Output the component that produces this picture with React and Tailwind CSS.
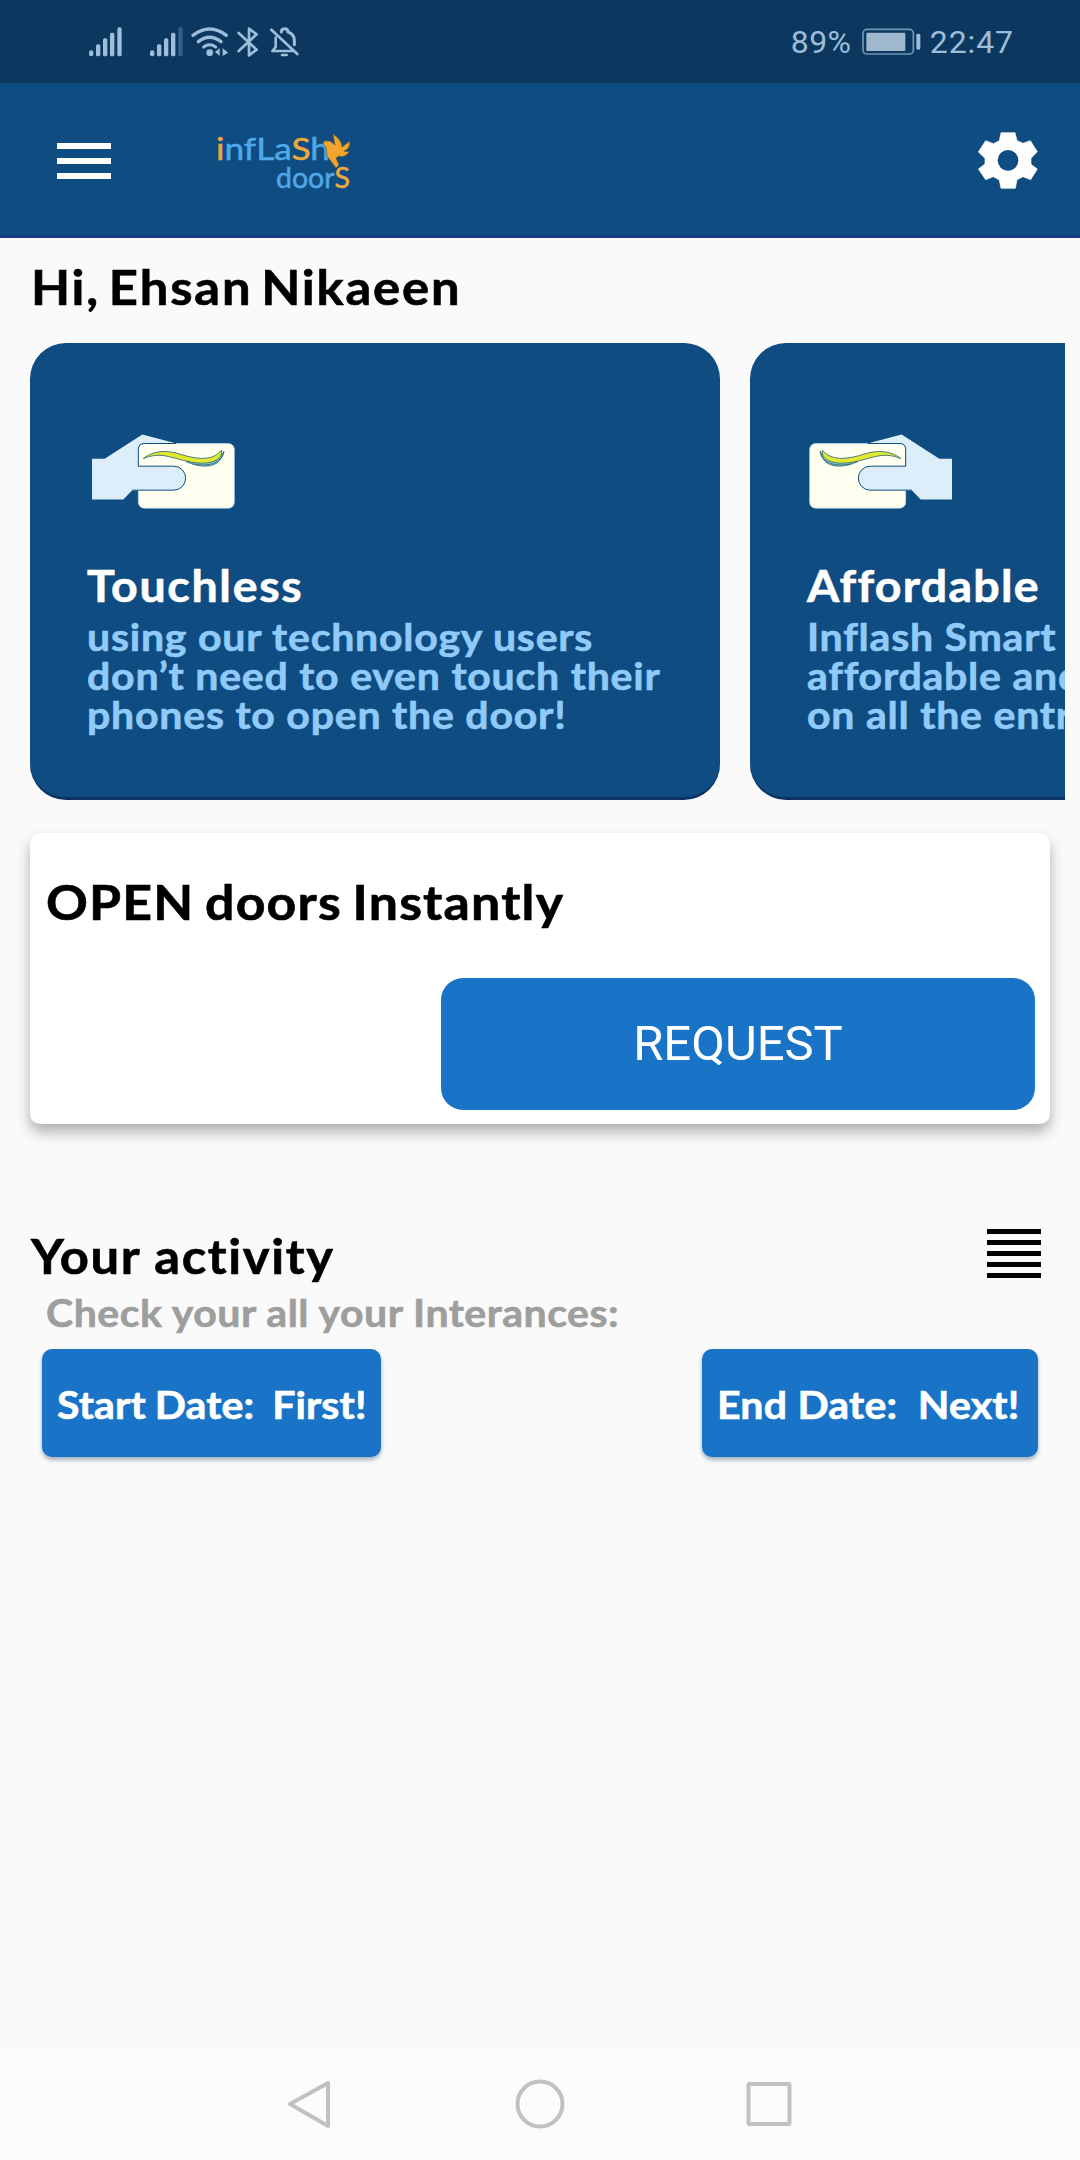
import { MdMenu } from "react-icons/md";

function Signal({ weak }) {
  return (
    <svg className="h-[30px] w-[34px]" viewBox="0 0 102 90">
      <g fill="#9dbdd9">
        <rect x="0" y="70" width="13" height="18" rx="6" />
        <rect x="21" y="52" width="13" height="36" rx="5" />
        <rect x="42" y="34" width="13" height="54" rx="5" />
        <rect x="63" y="17" width="13" height="71" rx="5" />
        <rect x="85" y="1" width="13" height="87" rx="5" opacity={weak ? 0.3 : 1} />
      </g>
    </svg>
  );
}

function StatusBar() {
  return (
    <div className="flex h-[83px] items-center bg-[#0c3860] pl-[89px] pr-[66px] text-[#9dbdd9]">
      <Signal />
      <div className="ml-[27px]">
        <Signal weak />
      </div>
      <svg className="ml-[7px] h-[30px] w-[38px]" viewBox="363 50 114 90" fill="none" stroke="currentColor" strokeLinecap="round">
        <path d="M369 75Q419 37 469 75" strokeWidth="10" />
        <path d="M385 94Q419 68 453 94" strokeWidth="10" />
        <path d="M401 110Q419 97 437 110" strokeWidth="9" />
        <circle cx="419" cy="127" r="10" fill="currentColor" stroke="none" />
        <path d="M449 113v24l-14-12zM458 137v-24l16 14z" fill="currentColor" stroke="none" />
      </svg>
      <svg className="ml-[8px] h-[30px] w-[22px]" viewBox="500 49 66 90" fill="none" stroke="currentColor" strokeWidth="8" strokeLinecap="round" strokeLinejoin="round">
        <path d="M505 67l54 50-23 17V54l23 17-54 50" />
      </svg>
      <svg className="ml-[11px] h-[30px] w-[29px]" viewBox="599 49 87 90" fill="none" stroke="currentColor" strokeLinecap="round" strokeLinejoin="round">
        <path d="M603 57l78 73" strokeWidth="8" />
        <path d="M616 81v28l-10 12h60" strokeWidth="8" />
        <path d="M633 64q0-10 10-10t10 10q18 6 19 24v14" strokeWidth="9" />
        <path d="M635 133h14" strokeWidth="8" />
      </svg>

      <div className="ml-auto flex items-center font-['Roboto',sans-serif] text-[32px] leading-none font-normal">
        <span className="w-[71px] tracking-[0.4px]">89%</span>
        <svg className="h-[28px] w-[60px]" viewBox="275 55 180 84">
          <rect x="278" y="59" width="151" height="74" rx="12" fill="none" stroke="currentColor" strokeWidth="5" opacity="0.7" />
          <rect x="288" y="69" width="117" height="55" rx="3" fill="#a0b8cd" />
          <rect x="438" y="72" width="12" height="48" rx="5" fill="currentColor" />
        </svg>
        <span className="ml-[8px] tracking-[0.9px]">22:47</span>
      </div>
    </div>
  );
}

function Logo() {
  return (
    <svg className="ml-[94px] mt-[5px] h-[62px] w-[140px] overflow-visible" viewBox="0 0 140 62" fontFamily="Lato, sans-serif" fontWeight="400" fill="#4fa9e6" stroke="#4fa9e6" strokeWidth="0.5">
      <text x="2" y="29" fontSize="31" textLength="114" lengthAdjust="spacingAndGlyphs">
        <tspan fill="#eda93c" stroke="#eda93c">i</tspan>nfLa<tspan fill="#eda93c" stroke="#eda93c">S</tspan>h
      </text>
      <text x="62" y="57" fontSize="28" textLength="74" lengthAdjust="spacingAndGlyphs">
        door<tspan fill="#eda93c" stroke="#eda93c">S</tspan>
      </text>
      <path
        d="M110 10l6 0 5 4-2-11q9 6 9 13l8-6q0 8-6 10l5 1q-4 6-10 4l-3 2 3 7-3 3-9-12-1-9-3-3z"
        fill="#f3a42c"
        stroke="#6b5a37"
        strokeWidth="0.7"
      />
    </svg>
  );
}

function Gear() {
  return (
    <svg className="mt-0.5 ml-auto h-[57px] w-[60px]" viewBox="53 67 180 171" fill="none">
      <path
        d="M122 69h42l6 24 18 8 22-8 21 33-19 20v18l19 14-20 32-23-9-18 9-5 26h-43l-5-25-18-10-23 9-22-32 20-15v-17l-20-19 22-34 23 9 18-9z"
        fill="currentColor"
        stroke="currentColor"
        strokeWidth="2"
        strokeLinejoin="round"
      />
      <circle cx="143" cy="152" r="31" fill="#0f4c81" />
    </svg>
  );
}

function Header() {
  return (
    <header className="flex h-[155px] items-center border-b-[3px] border-[#123f80] bg-[#0f4c81] pl-[48px] pr-[42px] text-white">
      <MdMenu className="mt-[3px] size-[72px]" />
      <Logo />
      <Gear />
    </header>
  );
}

function HandCard({ className }) {
  return (
    <svg className={`h-[75px] w-[143px] ${className}`} viewBox="36 44 429 224">
      <path d="M36 118h38L187 45l100 26v142H156l-26 27H36z" fill="#dceefa" />
      <rect x="175" y="72" width="288" height="194" rx="18" fill="#fffff0" stroke="#b9def2" strokeWidth="2" />
      <path d="M175 140V90q0-18 18-18h95" fill="none" stroke="#0f4c81" strokeWidth="3" />
      <path d="M150 140h131a36 36 0 0 1 0 72H150z" fill="#dceefa" />
      <path d="M174 140h107a36 36 0 0 1 0 72H156" fill="none" stroke="#0f4c81" strokeWidth="3" />
      <g stroke="#2d6478" strokeWidth="2.5">
        <path d="M318 126c48 22 104 22 114-31-12 25-36 32-78 30z" fill="#8fd0cd" />
        <path d="M190 117c30-24 70-26 110-13 55 17 98 20 125-12 4 24-21 39-60 39-40 0-75-16-110-22-25-4-45 0-65 8z" fill="#e3ea2e" />
        <path d="M338 133c40 8 78 3 92-29" fill="none" />
      </g>
    </svg>
  );
}

function FeatureCard({ title, text, flip, titleClass }) {
  return (
    <article className="h-[457px] w-[690px] shrink-0 rounded-[36px] border-b-[3px] border-[#0c3566] bg-[#0f4c81] pl-[57px] pt-[91px]">
      <HandCard className={flip ? "ml-[2px] -scale-x-100" : "ml-[5px]"} />
      <h2 className={`mt-[49px] w-fit origin-left scale-x-108 whitespace-nowrap text-[43px] leading-[56px] text-white ${titleClass}`}>{title}</h2>
      <p className="mt-[3px] w-fit origin-left scale-x-108 whitespace-pre text-[38px] leading-[39px] tracking-[0.7px] text-[#90caf9]">{text}</p>
    </article>
  );
}

function DateButton({ children, className }) {
  return (
    <button className={`h-[108px] rounded-[10px] bg-[#1974c8] pl-[15px] pt-[2px] text-left text-[38px] font-bold text-white shadow-[0_3px_4px_rgba(0,40,90,0.35)] ${className}`}>
      <span className="inline-block origin-left scale-x-108 whitespace-pre">{children}</span>
    </button>
  );
}

function NavBar() {
  return (
    <nav className="flex h-[112px] items-center bg-[#fcfcfc] pl-[284px] pr-[285px]">
      <svg className="h-[52px] w-[511px]" viewBox="0 0 511 52" fill="none" stroke="#c1c1c1" strokeWidth="4" strokeLinejoin="round">
        <path d="M44 5v43L6 26z" />
        <circle cx="256" cy="26" r="22.5" />
        <rect x="464.500" y="6" width="41" height="40" rx="1" />
      </svg>
    </nav>
  );
}

export default function App() {
  return (
    <div className="flex h-[2160px] w-[1080px] flex-col overflow-hidden bg-[#fafafa] font-['Lato',sans-serif] font-bold text-black">
      <StatusBar />
      <Header />

      <main className="flex-1 [-webkit-text-stroke:0.6px]">
        <h1 className="ml-[31px] mt-[19px] h-[60px] w-fit origin-left scale-x-108 text-[47px] leading-[60px] tracking-[1.7px] [word-spacing:-5px]">Hi, Ehsan Nikaeen</h1>

        <section className="ml-[30px] mr-[15px] mt-[26px] flex gap-[30px] overflow-hidden">
          <FeatureCard
            title="Touchless"
            text={"using our technology users\ndon’t need to even touch their\nphones to open the door!"}
            titleClass="tracking-[1.6px]"
          />
          <FeatureCard
            flip
            title="Affordable"
            text={"Inflash Smart is an\naffordable and easy\non all the entrances"}
            titleClass="tracking-[1.2px]"
          />
        </section>

        <section className="mx-[30px] mt-[33px] flex h-[291px] flex-col rounded-[10px] bg-white pl-[16px] pr-[15px] shadow-[0_8px_14px_rgba(0,0,0,0.3)]">
          <h2 className="mt-[39px] w-fit origin-left scale-x-108 text-[48px] leading-[60px] tracking-[1.1px] [word-spacing:-3px]">OPEN doors Instantly</h2>
          <button className="mt-[46px] h-[132px] w-[594px] self-end rounded-[22px] bg-[#1974c8] font-['Roboto',sans-serif] text-[49px] font-normal text-white [-webkit-text-stroke:0]">
            REQUEST
          </button>
        </section>

        <section className="mt-[101px]">
          <div className="flex justify-between pl-[31px] pr-[39px]">
            <h2 className="h-[62px] origin-left scale-x-108 text-[47px] leading-[62px] tracking-[1.5px]">Your activity</h2>
            <div className="mt-[4px] flex w-[54px] flex-col gap-[6px]">
              <div className="h-[5px] bg-black" />
              <div className="h-[5px] bg-black" />
              <div className="h-[5px] bg-black" />
              <div className="h-[5px] bg-black" />
              <div className="h-[5px] bg-black" />
            </div>
          </div>
          <p className="ml-[46px] h-[50px] w-fit origin-left scale-x-108 text-[38px] leading-[50px] tracking-[0.45px] text-[#9e9e9e]">
            Check your all your Interances:
          </p>
          <div className="mt-[12px] flex justify-between pl-[42px] pr-[42px]">
            <DateButton className="w-[339px] tracking-[0.1px] [word-spacing:-1px]">{"Start Date:  First!"}</DateButton>
            <DateButton className="w-[336px] tracking-[0.2px]">{"End Date:  Next!"}</DateButton>
          </div>
        </section>
      </main>

      <NavBar />
    </div>
  );
}
